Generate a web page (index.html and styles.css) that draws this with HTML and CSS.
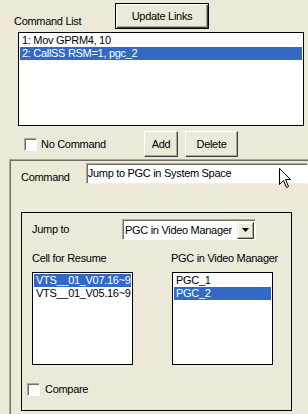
FILE: index.html
```html
<!DOCTYPE html>
<html lang="en">
<head>
  <meta charset="UTF-8" />
  <meta name="viewport" content="width=device-width, initial-scale=1.0"/>
  <title>Command Editor</title>
  <link rel="stylesheet" href="styles.css">
</head>
<body>

  <div class="top">
    <span class="caption">Command List</span>
    <button class="btn btn-default">Update Links</button>
  </div>

  <div class="listbox cmd-list">
    <div class="item">1: Mov GPRM4, 10</div>
    <div class="item sel">2: CallSS RSM=1, pgc_2</div>
  </div>

  <div class="actions">
    <label class="check"><span class="box"></span>No Command</label>
    <button class="btn btn-add">Add</button>
    <button class="btn btn-delete">Delete</button>
  </div>

  <div class="panel">
    <div class="cmd-row">
      <span class="cmd-label">Command</span>
      <div class="field">Jump to PGC in System Space</div>
    </div>

    <div class="group">
      <div class="jump-row">
        <span class="jump-label">Jump to</span>
        <div class="combo">
          <span class="combo-text">PGC in Video Manager</span>
          <span class="combo-btn">
            <svg width="7" height="4" viewBox="0 0 7 4"><path d="M0 0H7L3.5 4Z" fill="#000"/></svg>
          </span>
        </div>
      </div>

      <div class="columns">
        <div class="col">
          <div class="col-label">Cell for Resume</div>
          <div class="listbox small">
            <div class="item sel">VTS__01_V07.16~9</div>
            <div class="item">VTS__01_V05.16~9</div>
          </div>
        </div>
        <div class="col col-right">
          <div class="col-label">PGC in Video Manager</div>
          <div class="listbox small">
            <div class="item">PGC_1</div>
            <div class="item sel">PGC_2</div>
          </div>
        </div>
      </div>

      <label class="check compare"><span class="box"></span>Compare</label>
    </div>
  </div>

  <!-- mouse pointer -->
  <svg class="cursor" width="13" height="21" viewBox="0 0 13 21">
    <path d="M0.5 0.5V16.5L4.5 12.5L7.5 19.5L9.5 18.5L6.5 11.5H11.5Z" fill="#fff" stroke="#000" stroke-linejoin="miter"/>
  </svg>

</body>
</html>
```

FILE: styles.css
```css
body {
  margin: 0;
  width: 308px;
  height: 414px;
  overflow: hidden;
  position: relative;
  background: #ece9d8;
  font-family: 'Liberation Sans', Arial, sans-serif;
  font-size: 11px;
  letter-spacing: -0.3px;
  color: #000;
}

.top {
  display: flex;
  align-items: flex-end;
  padding: 3px 0 0 14px;
}

.caption {
  width: 101px;
  line-height: 13px;
  padding-bottom: 1px;
}

.btn {
  box-sizing: border-box;
  height: 26px;
  padding: 0;
  margin: 0;
  font: inherit;
  letter-spacing: inherit;
  color: #000;
  background: #ece9d8;
  border: 1px solid;
  border-color: #fff #404040 #404040 #fff;
  box-shadow: inset -1px -1px #aca899;
}

.btn-default {
  width: 94px;
  border-color: #000;
  box-shadow: inset 1px 1px #fff, inset -1px -1px #404040, inset -2px -2px #aca899;
}

.listbox {
  box-sizing: border-box;
  background: #fff;
  border: 1px solid #000;
  padding: 1px;
}

.cmd-list {
  margin: 3px 0 0 18px;
  width: 286px;
  height: 94px;
}

.item {
  line-height: 13px;
  padding-left: 2px;
  white-space: nowrap;
}

.item.sel {
  background: #316ac5;
  color: #fff;
}

.actions {
  display: flex;
  align-items: center;
  height: 26px;
  margin-top: 5px;
}

.check {
  display: flex;
  align-items: center;
  gap: 4px;
  line-height: 13px;
}

.actions .check {
  width: 120px;
  margin-left: 24px;
}

.box {
  box-sizing: border-box;
  width: 13px;
  height: 13px;
  background: #fff;
  border: 1px solid;
  border-color: #aca899 #fff #fff #aca899;
  box-shadow: inset 1px 1px #716f64;
}

.btn-add {
  width: 34px;
}

.btn-delete {
  width: 53px;
  margin-left: 7px;
}

.panel {
  box-sizing: border-box;
  margin: 2px 0 0 9px;
  height: 256px;
  border-top: 1px solid #aca899;
  border-left: 1px solid #aca899;
  box-shadow: inset 1px 1px #716f64;
  padding: 1px 0 0 1px;
}

.cmd-row {
  display: flex;
  align-items: flex-start;
  padding: 2px 0 0 10px;
}

.cmd-label {
  width: 70px;
  margin-top: 8px;
  line-height: 13px;
}

.field {
  box-sizing: border-box;
  width: 240px;
  height: 21px;
  padding: 3px 0 0 1px;
  line-height: 13px;
  background: #fff;
  border: 1px solid;
  border-color: #aca899 #fff #f1efe2 #aca899;
  box-shadow: inset 1px 1px #716f64;
  white-space: nowrap;
}

.group {
  box-sizing: border-box;
  margin: 28px 0 0 10px;
  width: 271px;
  height: 199px;
  border: 1px solid #000;
  padding: 6px 0 0 10px;
}

.jump-row {
  display: flex;
  align-items: center;
}

.jump-label {
  width: 90px;
  line-height: 13px;
}

.combo {
  box-sizing: border-box;
  display: flex;
  align-items: center;
  justify-content: space-between;
  width: 134px;
  height: 21px;
  background: #fff;
  border: 1px solid;
  border-color: #aca899 #fff #fff #aca899;
  box-shadow: inset 1px 1px #716f64;
  padding: 1px 1px 0 2px;
}

.combo-text {
  line-height: 13px;
  white-space: nowrap;
}

.combo-btn {
  box-sizing: border-box;
  display: flex;
  align-items: center;
  justify-content: center;
  width: 17px;
  height: 17px;
  background: #ece9d8;
  border: 1px solid;
  border-color: #f1efe2 #404040 #404040 #f1efe2;
  box-shadow: inset -1px -1px #aca899, inset 1px 1px #fff;
}

.columns {
  display: flex;
  gap: 39px;
  margin-top: 12px;
}

.col {
  width: 101px;
}

.col-label {
  line-height: 13px;
  white-space: nowrap;
}

.col-right .col-label {
  margin-left: -1px;
}

.listbox.small {
  width: 101px;
  height: 93px;
  margin-top: 7px;
}

.compare {
  margin: 18px 0 0 -5px;
  gap: 5px;
}

.cursor {
  position: absolute;
  left: 279px;
  top: 168px;
}
```
